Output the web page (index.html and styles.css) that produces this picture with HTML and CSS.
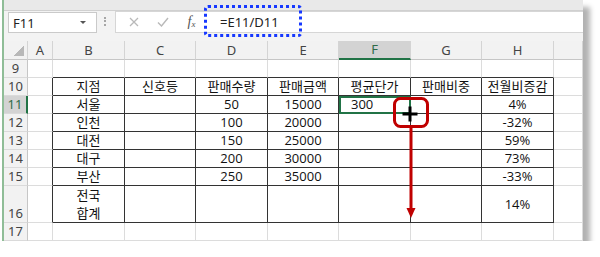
FILE: index.html
```html
<!DOCTYPE html>
<html lang="ko">
<head>
  <meta charset="UTF-8" />
  <title>평균단가 채우기</title>
  <link rel="stylesheet" href="styles.css">
</head>
<body>

  <div class="window">
    <div class="ribbon"></div>

    <div class="formula-bar">
      <div class="name-box">
        <span>F11</span>
        <span class="arrow"></span>
      </div>
      <div class="grip"></div>
      <div class="formula-box">
        <span class="fbtn">
          <svg width="10" height="10" viewBox="0 0 10 10"><path d="M1 1 L9 9 M9 1 L1 9" stroke="#b9b9b9" stroke-width="1.3" fill="none"/></svg>
        </span>
        <span class="fbtn">
          <svg width="12" height="10" viewBox="0 0 12 10"><path d="M1 5.5 L4.5 9 L11 1" stroke="#b9b9b9" stroke-width="1.4" fill="none"/></svg>
        </span>
        <span class="fbtn fx"><i>f</i><small>x</small></span>
        <div class="formula-input">=E11/D11</div>
      </div>
    </div>

    <table class="sheet">
      <colgroup>
        <col class="c-rh"><col class="c-a"><col class="c-wide"><col class="c-narrow"><col class="c-wide">
        <col class="c-narrow"><col class="c-wide"><col class="c-narrow"><col class="c-wide"><col class="c-i">
      </colgroup>
      <tr class="head">
        <td class="corner"></td>
        <td class="ch">A</td><td class="ch">B</td><td class="ch">C</td><td class="ch">D</td>
        <td class="ch">E</td><td class="ch cur">F</td><td class="ch">G</td><td class="ch">H</td><td class="ch"></td>
      </tr>
      <tr>
        <td class="rh">9</td>
        <td></td><td class="top"></td><td class="top"></td><td class="top"></td>
        <td class="top"></td><td class="top"></td><td class="top"></td><td class="top"></td><td></td>
      </tr>
      <tr>
        <td class="rh">10</td>
        <td class="edge"></td><td class="t">지점</td><td class="t">신호등</td><td class="t">판매수량</td>
        <td class="t">판매금액</td><td class="t">평균단가</td><td class="t">판매비중</td><td class="t">전월비증감</td><td></td>
      </tr>
      <tr>
        <td class="rh cur">11</td>
        <td class="edge"></td><td class="t">서울</td><td class="t"></td><td class="t">50</td>
        <td class="t">15000</td><td class="t active">300</td><td class="t"></td><td class="t">4%</td><td></td>
      </tr>
      <tr>
        <td class="rh">12</td>
        <td class="edge"></td><td class="t">인천</td><td class="t"></td><td class="t">100</td>
        <td class="t">20000</td><td class="t"></td><td class="t"></td><td class="t">-32%</td><td></td>
      </tr>
      <tr>
        <td class="rh">13</td>
        <td class="edge"></td><td class="t">대전</td><td class="t"></td><td class="t">150</td>
        <td class="t">25000</td><td class="t"></td><td class="t"></td><td class="t">59%</td><td></td>
      </tr>
      <tr>
        <td class="rh">14</td>
        <td class="edge"></td><td class="t">대구</td><td class="t"></td><td class="t">200</td>
        <td class="t">30000</td><td class="t"></td><td class="t"></td><td class="t">73%</td><td></td>
      </tr>
      <tr>
        <td class="rh">15</td>
        <td class="edge"></td><td class="t">부산</td><td class="t"></td><td class="t">250</td>
        <td class="t">35000</td><td class="t"></td><td class="t"></td><td class="t">-33%</td><td></td>
      </tr>
      <tr class="tall">
        <td class="rh">16</td>
        <td class="edge"></td><td class="t wrap">전국<br>합계</td><td class="t"></td><td class="t"></td>
        <td class="t"></td><td class="t"></td><td class="t"></td><td class="t">14%</td><td></td>
      </tr>
      <tr>
        <td class="rh">17</td>
        <td></td><td></td><td></td><td></td><td></td><td></td><td></td><td></td><td></td>
      </tr>
    </table>

    <!-- callouts drawn over the sheet -->
    <div class="formula-mark"></div>
    <svg class="drag-mark" width="579" height="241" viewBox="0 0 579 241">
      <rect x="390.5" y="98.5" width="33" height="28" rx="6" fill="none" stroke="#c00000" stroke-width="3"/>
      <line x1="407" y1="127" x2="407" y2="210" stroke="#c00000" stroke-width="3"/>
      <polygon points="402.5,208 411.5,208 407,218" fill="#c00000"/>
      <rect x="398.5" y="112.5" width="15" height="3" fill="#000"/>
      <rect x="404.5" y="106.5" width="3" height="15" fill="#000"/>
    </svg>
  </div>

</body>
</html>
```

FILE: styles.css
```css
* {
  box-sizing: border-box;
}

body {
  margin: 0;
  background: #fff;
  font-family: "Open Sans", "Noto Sans CJK KR", sans-serif;
}

.window {
  position: relative;
  width: 581px;
  height: 241px;
  margin-left: 2px;
  border-left: 2px solid #8fbd97;
  background: #fff;
  box-shadow: 7px 7px 5px rgba(0, 0, 0, 0.3);
  overflow: hidden;
}

.ribbon {
  height: 11px;
  background: #e9e9e9;
  border-bottom: 1px solid #d0d0d0;
}

.formula-bar {
  display: flex;
  align-items: flex-start;
  height: 30px;
  padding-left: 4px;
  background: #f3f3f3;
}

.name-box {
  display: flex;
  align-items: center;
  width: 89px;
  height: 21px;
  margin-top: 1px;
  padding-left: 4px;
  background: #fff;
  border: 1px solid #cacaca;
  font-family: "Noto Sans", sans-serif;
  font-size: 13px;
  color: #222;
}

.arrow {
  margin-left: auto;
  margin-right: 10px;
  border-left: 3px solid transparent;
  border-right: 3px solid transparent;
  border-top: 3px solid #555;
}

.grip {
  width: 18px;
  height: 21px;
  display: flex;
  justify-content: center;
  align-items: center;
}

.grip::before {
  content: "";
  width: 2px;
  height: 9px;
  border-left: 2px dotted #a6a6a6;
}

.formula-box {
  flex: 1;
  display: flex;
  align-items: center;
  height: 22px;
  padding-left: 3px;
  background: #fff;
  border: 1px solid #d6d6d6;
  border-right: none;
}

.fbtn {
  width: 29px;
  display: flex;
  justify-content: center;
  align-items: center;
}

.fx {
  font-family: "Liberation Serif", serif;
  font-size: 14px;
  color: #555;
}

.fx small {
  font-size: 9px;
  font-style: italic;
  margin-top: 4px;
}

.formula-input {
  padding-left: 14px;
  font-family: "Noto Sans", sans-serif;
  font-size: 13px;
  color: #222;
}

.sheet {
  table-layout: fixed;
  border-collapse: separate;
  border-spacing: 0;
  width: 579px;
  font-size: 13px;
  color: #111;
}

.c-rh { width: 24px; }
.c-a { width: 25px; }
.c-wide { width: 72px; }
.c-narrow { width: 71px; }
.c-i { width: 29px; }

.sheet td {
  height: 18px;
  padding: 0;
  line-height: 17px;
  text-align: center;
  vertical-align: middle;
  white-space: nowrap;
  border-right: 1px solid #dcdcdc;
  border-bottom: 1px solid #dcdcdc;
}

.sheet .tall td {
  height: 36px;
}

.sheet .ch,
.sheet .corner {
  background: #f2f2f2;
  border-right-color: #d4d4d4;
  border-bottom-color: #c6c6c6;
  font-family: "Noto Sans", sans-serif;
  color: #444;
}

.sheet .corner {
  background-color: #f2f2f2;
  background-image: linear-gradient(135deg, transparent 50%, #b8b8b8 50%);
  background-size: 10px 10px;
  background-position: right 3px bottom 3px;
  background-repeat: no-repeat;
}

.sheet .rh {
  background: #f2f2f2;
  border-right-color: #c6c6c6;
  border-bottom-color: #dadada;
  font-family: "Noto Sans", sans-serif;
  color: #444;
}

.sheet .tall .rh {
  vertical-align: bottom;
}

.sheet .ch.cur {
  background: #d3d3d3;
  border-bottom: 2px solid #217346;
  color: #2f6b48;
}

.sheet .rh.cur {
  background: #d3d3d3;
  border-right: 2px solid #217346;
  color: #2f6b48;
}

.sheet .top {
  border-bottom-color: #333;
}

.sheet .edge {
  border-right-color: #333;
}

.sheet .t {
  border-right-color: #333;
  border-bottom-color: #333;
}

.sheet .wrap {
  line-height: 18px;
}

.sheet .active {
  outline: 2px solid #217346;
  outline-offset: -2px;
  text-align: left;
  padding-left: 12px;
}

.formula-mark {
  position: absolute;
  left: 200px;
  top: 5px;
  width: 98px;
  height: 32px;
  border: 3px dotted #1638ff;
  border-radius: 4px;
}

.drag-mark {
  position: absolute;
  left: 0;
  top: 0;
  pointer-events: none;
}
```
